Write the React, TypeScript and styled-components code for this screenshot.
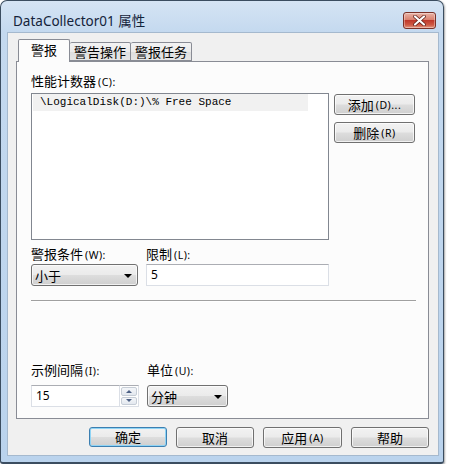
import React from "react";
import styled, { createGlobalStyle } from "styled-components";

const Global = createGlobalStyle`
  html, body { margin: 0; padding: 0; background: #ffffff; }
  body { font-family: "Noto Sans CJK SC", "Noto Sans", sans-serif; color: #000; }
  * { box-sizing: border-box; }
`;

const Window = styled.div`
  width: 444px;
  height: 464px;
  border: 1px solid #3b4d60;
  border-bottom-width: 2px;
  border-radius: 7px 7px 3px 3px;
  background: linear-gradient(180deg, #d5e4f4 0px, #c4d9ef 31px, #bad3ed 100%);
  padding: 0 4px 6px 6px;
  display: flex;
  flex-direction: column;
  box-shadow: 1px 1px 2px rgba(0, 0, 0, 0.35);
`;

const TitleBar = styled.div`
  height: 31px;
  display: flex;
  align-items: flex-start;
  justify-content: space-between;
  padding: 10px 3px 0 6px;
`;

const Title = styled.div`
  font-family: "Noto Sans", "Noto Sans CJK SC", sans-serif;
  font-size: 13.5px;
  line-height: 20px;
  color: #14233a;
`;

const CloseButton = styled.div`
  width: 33px;
  height: 17px;
  margin-top: 1px;
  border: 1px solid #7a3128;
  border-radius: 3px;
  background: linear-gradient(180deg, #e9b3a6 0%, #d9816f 45%, #c0392b 50%, #cf5a45 80%, #e49a84 100%);
  display: flex;
  align-items: center;
  justify-content: center;
  box-shadow: inset 0 0 0 1px rgba(255, 255, 255, 0.35);
`;

const Client = styled.div`
  flex: 1;
  background: #f0f0f0;
  border: 1px solid #a5b9ce;
  padding: 6px 9px 0 8px;
  display: flex;
  flex-direction: column;
`;

const TabStrip = styled.div`
  display: flex;
  align-items: flex-end;
  height: 22px;
  padding-left: 2px;
  position: relative;
  z-index: 1;
`;

const Tab = styled.div<{ $active?: boolean }>`
  height: ${(p) => (p.$active ? "23px" : "19px")};
  margin-bottom: ${(p) => (p.$active ? "-1px" : "0")};
  padding: ${(p) => (p.$active ? "0 12px" : "0 4px")};
  border: 1px solid #898c95;
  border-bottom: ${(p) => (p.$active ? "none" : "1px solid #898c95")};
  border-left-width: ${(p) => (p.$active ? "1px" : "0")};
  border-radius: 2px 2px 0 0;
  background: ${(p) => (p.$active ? "#fcfcfc" : "linear-gradient(180deg, #f3f3f3 0%, #ebebeb 50%, #dedede 51%, #e5e5e5 100%)")};
  font-size: 13px;
  line-height: ${(p) => (p.$active ? "20px" : "18px")};
  color: #000;
  &:nth-child(2) { border-left-width: 0; }
`;

const Panel = styled.div`
  width: 413px;
  height: 358px;
  border: 1px solid #898c95;
  background: #fcfcfc;
  padding: 11px 12px 0 14px;
  display: flex;
  flex-direction: column;
`;

const Label = styled.div`
  font-size: 13px;
  line-height: 16px;
  color: #000;
  white-space: nowrap;
`;

const Acc = styled.span`
  font-family: "Noto Sans", sans-serif;
  font-size: 10.5px;
  margin-left: 2px;
  letter-spacing: 0.5px;
`;

const CounterRow = styled.div`
  display: flex;
  gap: 5px;
  margin-top: 3px;
  align-items: flex-start;
`;

const ListBox = styled.div`
  width: 298px;
  height: 147px;
  border: 1px solid #828790;
  background: #fff;
  padding: 0 20px 0 1px;
`;

const ListItem = styled.div`
  height: 17px;
  background: #f1f1f1;
  padding-left: 7px;
  font-family: "Liberation Mono", monospace;
  font-size: 11px;
  line-height: 17px;
  color: #000;
  white-space: nowrap;
`;

const SideButtons = styled.div`
  display: flex;
  flex-direction: column;
  gap: 7px;
  margin-top: 1px;
`;

const Button = styled.div<{ $w?: number; $default?: boolean }>`
  width: ${(p) => p.$w ?? 81}px;
  height: ${(p) => (p.$default ? 20 : 21)}px;
  border: 1px solid ${(p) => (p.$default ? "#3c7fb1" : "#707070")};
  border-radius: 3px;
  background: linear-gradient(180deg, #f2f2f2 0%, #ebebeb 48%, #dddddd 52%, #cfcfcf 100%);
  box-shadow: inset 0 0 0 1px ${(p) => (p.$default ? "#8fd4f5" : "rgba(255,255,255,0.7)")};
  display: flex;
  align-items: center;
  justify-content: center;
  font-size: 13px;
  line-height: 18px;
  color: #000;
  white-space: nowrap;
`;

const FieldGrid = styled.div<{ $cols: string; $top: number; $gap: number }>`
  display: grid;
  grid-template-columns: ${(p) => p.$cols};
  column-gap: 8px;
  row-gap: ${(p) => p.$gap}px;
  margin-top: ${(p) => p.$top}px;
  align-items: start;
`;

const Combo = styled.div`
  height: 22px;
  border: 1px solid #707070;
  border-radius: 3px;
  background: linear-gradient(180deg, #f2f2f2 0%, #ebebeb 48%, #dddddd 52%, #cfcfcf 100%);
  box-shadow: inset 0 0 0 1px rgba(255, 255, 255, 0.7);
  display: flex;
  align-items: center;
  justify-content: space-between;
  padding: 0 5px 0 3px;
  font-size: 13px;
  color: #000;
`;

const Arrow = styled.span`
  width: 0;
  height: 0;
  border-left: 4px solid transparent;
  border-right: 4px solid transparent;
  border-top: 4px solid #000;
  margin-top: 2px;
`;

const TextBox = styled.div`
  height: 22px;
  border: 1px solid #dbdfe6;
  border-top-color: #abadb3;
  background: #fff;
  padding-left: 4px;
  font-family: "Noto Sans", sans-serif;
  font-size: 12px;
  line-height: 19px;
  color: #000;
`;

const SpinField = styled.div`
  display: flex;
  height: 22px;
`;

const SpinInput = styled(TextBox)`
  flex: 1;
  border-right: none;
`;

const Spinner = styled.div`
  width: 20px;
  display: flex;
  flex-direction: column;
  border: 1px solid #dbdfe6;
  border-top-color: #abadb3;
  background: #fff;
  padding: 1px;
  gap: 1px;
`;

const SpinHalf = styled.div<{ $down?: boolean }>`
  flex: 1;
  border: 1px solid #c6cdd6;
  border-radius: 2px;
  background: linear-gradient(180deg, #f4f6f9 0%, #e3e8ef 100%);
  display: flex;
  align-items: center;
  justify-content: center;
  &::after {
    content: "";
    border-left: 3px solid transparent;
    border-right: 3px solid transparent;
    ${(p) => (p.$down ? "border-top: 3px solid #4d6185;" : "border-bottom: 3px solid #4d6185;")}
  }
`;

const Separator = styled.div`
  width: 385px;
  height: 2px;
  margin-top: 14px;
  border-top: 1px solid #a0a0a0;
  border-bottom: 1px solid #ffffff;
`;

const ButtonRow = styled.div`
  display: flex;
  justify-content: flex-end;
  gap: 9px;
  margin-top: 8px;
  padding-right: 0;
`;

export default function App() {
  return (
    <>
      <Global />
      <Window>
        <TitleBar>
          <Title>DataCollector01 属性</Title>
          <CloseButton>
            <svg width="13" height="11" viewBox="0 0 13 11">
              <path d="M2 1.5 L11 9.5 M11 1.5 L2 9.5" stroke="#5a1a12" strokeWidth="3.6" strokeLinecap="round" />
              <path d="M2 1.5 L11 9.5 M11 1.5 L2 9.5" stroke="#ffffff" strokeWidth="2.2" strokeLinecap="round" />
            </svg>
          </CloseButton>
        </TitleBar>
        <Client>
          <TabStrip>
            <Tab $active>警报</Tab>
            <Tab>警告操作</Tab>
            <Tab>警报任务</Tab>
          </TabStrip>
          <Panel>
            <Label>
              性能计数器<Acc>(C):</Acc>
            </Label>
            <CounterRow>
              <ListBox>
                <ListItem>\LogicalDisk(D:)\% Free Space</ListItem>
              </ListBox>
              <SideButtons>
                <Button>
                  添加<Acc>(D)...</Acc>
                </Button>
                <Button>
                  删除<Acc>(R)</Acc>
                </Button>
              </SideButtons>
            </CounterRow>
            <FieldGrid $cols="107px 183px" $top={6} $gap={1}>
              <Label>
                警报条件<Acc>(W):</Acc>
              </Label>
              <Label>
                限制<Acc>(L):</Acc>
              </Label>
              <Combo>
                小于
                <Arrow />
              </Combo>
              <TextBox>5</TextBox>
            </FieldGrid>
            <Separator />
            <FieldGrid $cols="108px 81px" $top={60} $gap={6}>
              <Label>
                示例间隔<Acc>(I):</Acc>
              </Label>
              <Label>
                单位<Acc>(U):</Acc>
              </Label>
              <SpinField>
                <SpinInput>15</SpinInput>
                <Spinner>
                  <SpinHalf />
                  <SpinHalf $down />
                </Spinner>
              </SpinField>
              <Combo>
                分钟
                <Arrow />
              </Combo>
            </FieldGrid>
          </Panel>
          <ButtonRow>
            <Button $w={78} $default>确定</Button>
            <Button $w={78}>取消</Button>
            <Button $w={79}>
              应用<Acc>(A)</Acc>
            </Button>
            <Button $w={78}>帮助</Button>
          </ButtonRow>
        </Client>
      </Window>
    </>
  );
}
